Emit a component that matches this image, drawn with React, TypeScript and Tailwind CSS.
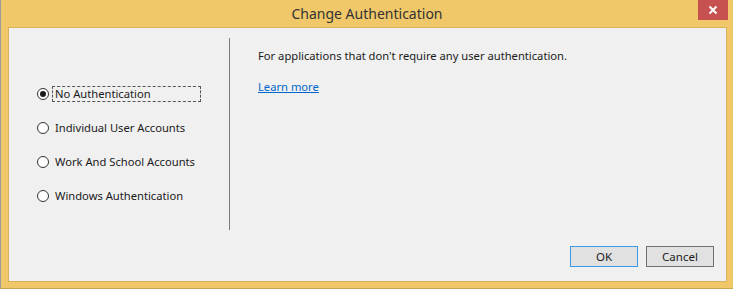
const options = [
  "No Authentication",
  "Individual User Accounts",
  "Work And School Accounts",
  "Windows Authentication",
];

const Radio = ({ checked }: { checked: boolean }) => (
  <span className="w-[12px] h-[12px] rounded-full border border-[#333333] bg-white flex items-center justify-center shrink-0">
    {checked && <span className="w-[6px] h-[6px] rounded-full bg-[#1a1a1a]" />}
  </span>
);

export default function App() {
  return (
    <div
      className="w-[733px] h-[289px] bg-[#f0c869] border-l border-l-[#9a9a9a] border-b border-b-[#c9a64f] flex flex-col text-[11.2px] text-[#1a1a1a]"
      style={{ fontFamily: '"Noto Sans", "Segoe UI", Arial, sans-serif' }}
    >
      <div className="h-[27px] flex items-start relative">
        <div className="flex-1 text-center text-[14px] text-[#333333] pt-[3px]">Change Authentication</div>
        <div className="absolute right-[5px] top-0 w-[30px] h-[20px] bg-[#c75050] flex items-center justify-center">
          <svg width="10" height="10" viewBox="0 0 10 10">
            <path d="M1.5 1.5 L8.5 8.5 M8.5 1.5 L1.5 8.5" stroke="white" strokeWidth="2" />
          </svg>
        </div>
      </div>
      <div className="ml-[7px] w-[719px] h-[255px] bg-[#f0f0f0] border border-[#d7b25b] flex flex-col">
        <div className="flex pt-[10px] h-[203px]">
          <div className="w-[220px] flex flex-col pt-[49px] pl-[28px] gap-[20px]">
            {options.map((o, i) => (
              <div key={o} className="flex items-center h-[14px]">
                <Radio checked={i === 0} />
                <span
                  className={`ml-[3px] px-[2px] leading-[14px] border border-dashed ${
                    i === 0 ? "border-[#555555] w-[149px]" : "border-transparent"
                  }`}
                >
                  {o}
                </span>
              </div>
            ))}
          </div>
          <div className="w-[1px] bg-[#7a7a7a] h-[192px]" />
          <div className="flex flex-col pl-[28px] pt-[10px]">
            <div className="leading-[16px]">For applications that don't require any user authentication.</div>
            <a className="mt-[15px] leading-[16px] text-[#0066cc] underline">Learn more</a>
          </div>
        </div>
        <div className="flex justify-end gap-[8px] pr-[12px] pt-[15px]">
          <button className="w-[68px] h-[21px] bg-[#e1e1e1] border border-[#3c9ae8] text-[11.5px] leading-none">OK</button>
          <button className="w-[68px] h-[21px] bg-[#e1e1e1] border border-[#707070] text-[11.5px] leading-none">Cancel</button>
        </div>
      </div>
    </div>
  );
}
